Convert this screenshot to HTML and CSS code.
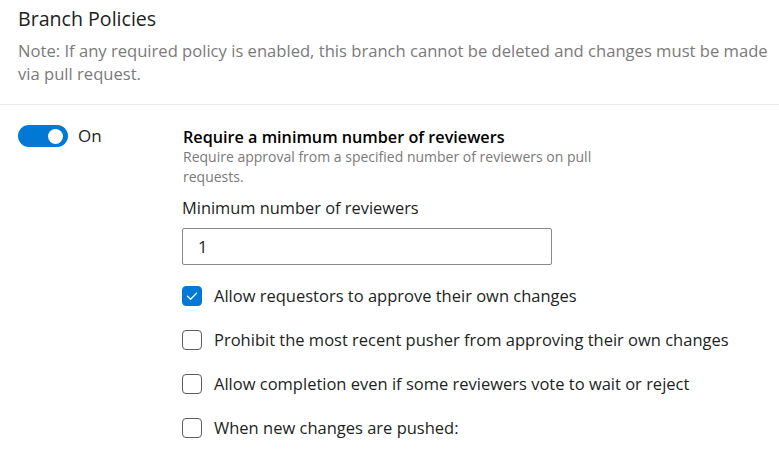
FILE: index.html
```html
<!DOCTYPE html>
<html lang="en">
<head>
<meta charset="utf-8">
<title>Branch Policies</title>
<link rel="stylesheet" href="styles.css">
</head>
<body>
<header class="page-header">
  <h2 class="title">Branch Policies</h2>
  <p class="note">Note: If any required policy is enabled, this branch cannot be deleted and changes must be made via pull request.</p>
</header>
<section class="policy">
  <div class="toggle-col">
    <span class="toggle" role="switch" aria-checked="true"><span class="knob"></span></span>
    <span class="toggle-label">On</span>
  </div>
  <div class="policy-body">
    <h3 class="policy-title">Require a minimum number of reviewers</h3>
    <p class="policy-desc">Require approval from a specified number of reviewers on pull requests.</p>
    <label class="field-label">Minimum number of reviewers</label>
    <div class="text-input">1</div>
    <ul class="options">
      <li class="option"><span class="checkbox checked"><svg viewBox="0 0 20 20" width="20" height="20"><path d="M5.5 10.2 L8.6 13.2 L14.5 7.2" fill="none" stroke="#fff" stroke-width="1.3" stroke-linecap="round" stroke-linejoin="round"/></svg></span>Allow requestors to approve their own changes</li>
      <li class="option"><span class="checkbox"></span>Prohibit the most recent pusher from approving their own changes</li>
      <li class="option"><span class="checkbox"></span>Allow completion even if some reviewers vote to wait or reject</li>
      <li class="option"><span class="checkbox"></span>When new changes are pushed:</li>
    </ul>
  </div>
</section>
</body>
</html>
```
FILE: styles.css
```css
* { box-sizing: border-box; }
html, body { margin: 0; padding: 0; background: #fff; }
body {
  font-family: "Open Sans", "Noto Sans", sans-serif;
  color: #201f1e;
  width: 779px;
  height: 451px;
  overflow: hidden;
}
.page-header {
  padding: 4px 0 19px 18px;
  border-bottom: 1px solid #eaeaea;
}
.title {
  margin: 0;
  font-size: 19.6px;
  font-weight: 400;
  line-height: 30px;
  color: #201f1e;
}
.note {
  margin: 5px 0 0 0;
  width: 758px;
  font-size: 16.6px;
  line-height: 23px;
  color: #7a7a7a;
}
.policy {
  display: flex;
  padding: 20px 0 0 18px;
}
.toggle-col {
  width: 164px;
  flex: none;
  display: flex;
  align-items: flex-start;
  gap: 10px;
}
.toggle {
  display: flex;
  align-items: center;
  justify-content: flex-end;
  width: 50px;
  height: 22px;
  border-radius: 11px;
  background: #0078d4;
  padding-right: 5px;
}
.knob {
  width: 15px;
  height: 15px;
  border-radius: 50%;
  background: #fff;
}
.toggle-label {
  font-size: 17px;
  line-height: 22px;
  color: #201f1e;
}
.policy-body { flex: 1; }
.policy-title {
  margin: 2px 0 0 1px;
  font-size: 16.2px;
  font-weight: 600;
  line-height: 20px;
  color: #000;
}
.policy-desc {
  margin: 0 0 0 1px;
  width: 425px;
  font-size: 14px;
  line-height: 20px;
  color: #7a7a7a;
}
.field-label {
  display: block;
  margin-top: 10px;
  font-size: 16.4px;
  line-height: 22px;
  color: #201f1e;
}
.text-input {
  margin-top: 9px;
  width: 370px;
  height: 37px;
  border: 1px solid #8a8886;
  border-radius: 2px;
  padding: 0 15px;
  font-size: 16.5px;
  line-height: 35px;
  color: #201f1e;
}
.options {
  list-style: none;
  margin: 21px 0 0 0;
  padding: 0;
  display: flex;
  flex-direction: column;
  gap: 24px;
}
.option {
  display: flex;
  align-items: center;
  gap: 12px;
  font-size: 16.5px;
  line-height: 20px;
  color: #201f1e;
}
.checkbox {
  flex: none;
  width: 20px;
  height: 20px;
  border: 1px solid #605e5c;
  border-radius: 4px;
  background: #fff;
  display: flex;
}
.checkbox.checked {
  background: #0078d4;
  border-color: #0078d4;
}
.checkbox svg { margin: -1px; }
```
